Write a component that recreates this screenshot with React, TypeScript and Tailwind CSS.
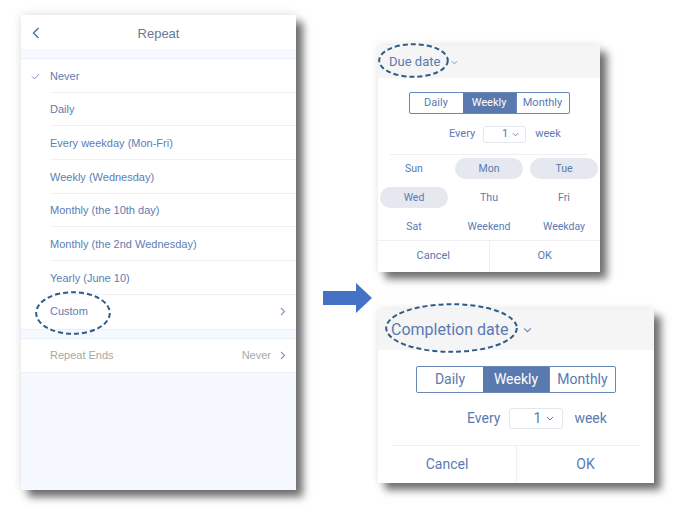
import React from "react";

const leftRows = [
  "Never",
  "Daily",
  "Every weekday (Mon-Fri)",
  "Weekly (Wednesday)",
  "Monthly (the 10th day)",
  "Monthly (the 2nd Wednesday)",
  "Yearly (June 10)",
  "Custom",
];

const days = [
  { d: "Sun", on: false },
  { d: "Mon", on: true },
  { d: "Tue", on: true },
  { d: "Wed", on: true },
  { d: "Thu", on: false },
  { d: "Fri", on: false },
  { d: "Sat", on: false },
  { d: "Weekend", on: false },
  { d: "Weekday", on: false },
];

function ChevronRight({ className }: { className?: string }) {
  return (
    <svg width="6" height="9" viewBox="0 0 6 9" className={className}>
      <path d="M1 1l3.5 3.5L1 8" fill="none" stroke="currentColor" strokeWidth="1.1" />
    </svg>
  );
}

function ChevronDown({ w = 8, h = 5 }: { w?: number; h?: number }) {
  return (
    <svg width={w} height={h} viewBox="0 0 8 5">
      <path d="M1 1l3 3 3-3" fill="none" stroke="currentColor" strokeWidth="1" />
    </svg>
  );
}

function Ellipse({ className, w, h }: { className: string; w: number; h: number }) {
  return (
    <svg width={w} height={h} className={`absolute pointer-events-none ${className}`}>
      <ellipse
        cx={w / 2}
        cy={h / 2}
        rx={w / 2 - 1.2}
        ry={h / 2 - 1.2}
        fill="none"
        stroke="#2e5d88"
        strokeWidth="2"
        strokeDasharray="5 3"
      />
    </svg>
  );
}

function RepeatPanel() {
  return (
    <div className="relative ml-[21px] mt-[15px] w-[275px] h-[475px] bg-[#f5f8fe] shadow-[7px_7px_8px_rgba(0,0,0,0.55),0_0_10px_rgba(0,0,0,0.12)] font-['Liberation_Sans',Arial,sans-serif]">
      <div className="relative h-[34px] pt-[3px] bg-white flex items-center justify-center text-[13px] text-[#6a7895]">
        <svg width="8" height="12" viewBox="0 0 8 12" className="absolute left-[11px] top-[12px] text-[#4c6fa8]">
          <path d="M6.5 1L1.5 6l5 5" fill="none" stroke="currentColor" strokeWidth="1.4" />
        </svg>
        Repeat
      </div>
      <div className="h-[10px] border-b border-[#eaf0f8]" />
      <div className="bg-white">
        {leftRows.map((r, i) => (
          <div key={r} className="relative h-[33.7px] flex items-center pl-[29px] text-[11px] text-[#5e7db3]">
            {i === 0 && (
              <svg width="9" height="7" viewBox="0 0 9 7" className="absolute left-[10px] top-[14px] text-[#7c95c0]">
                <path d="M1 3.5l2.5 2.5L8 1" fill="none" stroke="currentColor" strokeWidth="1" />
              </svg>
            )}
            <span className="flex-1">{r}</span>
            {r === "Custom" && <ChevronRight className="mr-[10px] text-[#7f97c1]" />}
            {i < leftRows.length - 1 && (
              <div className="absolute left-[29px] right-0 bottom-0 h-px bg-[#eef1f7]" />
            )}
          </div>
        ))}
      </div>
      <div className="h-[10px] border-y border-[#eaf0f8]" />
      <div className="h-[34px] bg-white flex items-center pl-[29px] text-[11px] text-[#a8a8a8] border-b border-[#eaf0f8]">
        <span className="flex-1">Repeat Ends</span>
        <span className="mr-[9px]">Never</span>
        <ChevronRight className="mr-[10px] text-[#7f97c1]" />
      </div>
      <Ellipse className="left-[14px] top-[276px]" w={76} h={44} />
    </div>
  );
}

function Segmented({ big }: { big?: boolean }) {
  const seg = big ? "w-[66px] h-[25px] text-[14px]" : "w-[53px] h-[20px] text-[11px]";
  return (
    <div className="flex border border-[#6a87b9] rounded-[2px]">
      {["Daily", "Weekly", "Monthly"].map((s, i) => (
        <div
          key={s}
          className={`${seg} flex items-center justify-center ${
            i === 1 ? "bg-[#5a79ae] text-white" : "text-[#5a7ab2]"
          } ${i === 2 ? "border-l border-[#6a87b9]" : ""}`}
        >
          {s}
        </div>
      ))}
    </div>
  );
}

function DuePanel() {
  return (
    <div className="relative mt-[45px] w-[222px] h-[227px] bg-white shadow-[7px_7px_8px_rgba(0,0,0,0.55),0_0_8px_rgba(0,0,0,0.1)] font-['Roboto',sans-serif] text-[#5a7ab2] flex flex-col">
      <div className="h-[33px] bg-[#f5f5f5] flex items-center pl-[11px] text-[13px] gap-[11px]">
        Due date
        <span className="text-[#6f89b8] mt-[1px]"><ChevronDown w={7} h={5} /></span>
      </div>
      <div className="flex justify-center mt-[14px]">
        <Segmented />
      </div>
      <div className="flex items-center mt-[12px] pl-[71px] text-[11px] h-[17px]">
        <span>Every</span>
        <div className="ml-[8px] w-[43px] h-[17px] border border-[#e4e7ec] rounded-[3px] flex items-center justify-end pr-[6px] gap-[4px]">
          <span>1</span>
          <ChevronDown w={7} h={5} />
        </div>
        <span className="ml-[9px]">week</span>
      </div>
      <div className="mx-[12px] mt-[11px] h-px bg-[#eef0f4]" />
      <div className="grid grid-cols-3 gap-x-[7px] gap-y-[8px] px-[2px] mt-[3px] text-[10.5px]">
        {days.map((x) => (
          <div
            key={x.d}
            className={`h-[21px] rounded-full flex items-center justify-center ${x.on ? "bg-[#e5e8ee]" : ""}`}
          >
            {x.d}
          </div>
        ))}
      </div>
      <div className="mt-[3px] h-px bg-[#eef0f4]" />
      <div className="flex-1 flex text-[11px]">
        <div className="flex-1 flex items-center justify-center border-r border-[#eef0f4]">Cancel</div>
        <div className="flex-1 flex items-center justify-center">OK</div>
      </div>
      <Ellipse className="left-0 top-[-2px]" w={71} h={35} />
    </div>
  );
}

function CompletionPanel() {
  return (
    <div className="relative mt-[37px] w-[276px] h-[174px] bg-white shadow-[7px_7px_8px_rgba(0,0,0,0.55),0_0_8px_rgba(0,0,0,0.1)] font-['Roboto',sans-serif] text-[#5a7ab2] flex flex-col">
      <div className="h-[41px] bg-[#f5f5f5] flex items-center pl-[13px] text-[16px] gap-[15px]">
        Completion date
        <span className="text-[#6f89b8] mt-[1px]"><ChevronDown w={9} h={6} /></span>
      </div>
      <div className="flex justify-center mt-[16px]">
        <Segmented big />
      </div>
      <div className="flex items-center mt-[15px] pl-[89px] text-[14px] h-[21px]">
        <span>Every</span>
        <div className="ml-[9px] w-[54px] h-[21px] border border-[#e4e7ec] rounded-[3px] flex items-center justify-end pr-[8px] gap-[5px]">
          <span>1</span>
          <ChevronDown w={8} h={5} />
        </div>
        <span className="ml-[11px]">week</span>
      </div>
      <div className="mx-[14px] mt-[16px] h-px bg-[#eef0f4]" />
      <div className="flex-1 flex text-[14px]">
        <div className="w-[139px] flex items-center justify-center border-r border-[#eef0f4]">Cancel</div>
        <div className="flex-1 flex items-center justify-center">OK</div>
      </div>
      <Ellipse className="left-[7px] top-[-6px]" w={133} h={50} />
    </div>
  );
}

export default function App() {
  return (
    <div className="w-[685px] h-[517px] bg-white flex overflow-hidden">
      <RepeatPanel />
      <div className="ml-[27px] mt-[283px]">
        <svg width="49" height="30" viewBox="0 0 49 30">
          <path d="M0 8h33V0l16 15-16 15v-8H0z" fill="#4472c4" />
        </svg>
      </div>
      <div className="ml-[6px] flex flex-col">
        <DuePanel />
        <CompletionPanel />
      </div>
    </div>
  );
}
